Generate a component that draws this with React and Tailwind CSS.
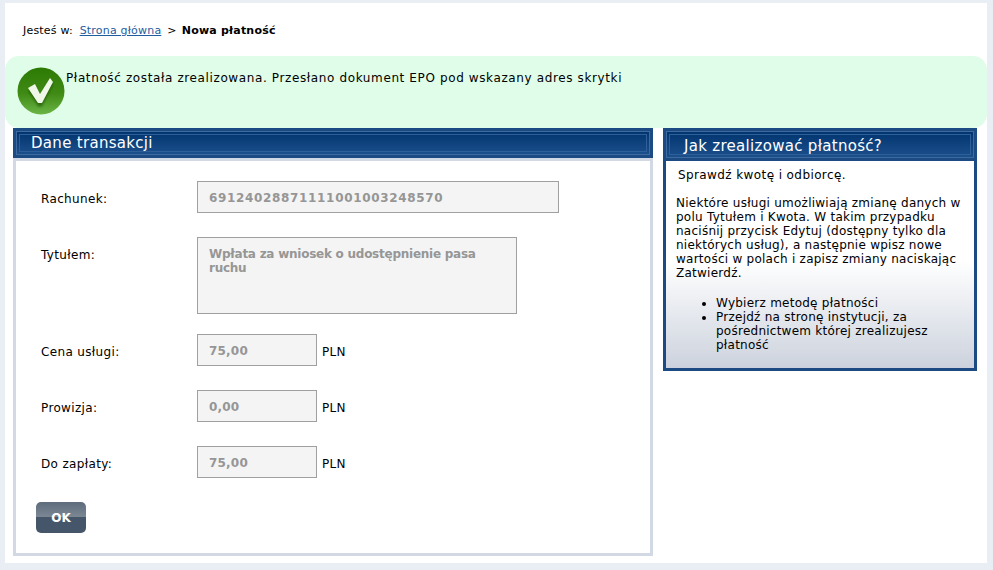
import React from 'react'

const font = "font-['DejaVu_Sans',sans-serif]"

const PanelHeader = ({ title, height = 'h-[30px]', textClass = 'pl-[11px]' }) => (
  <div className={`${height} bg-[#1c4a82] p-[3px]`}>
    <div className="h-full border border-[#3f6a9e] p-[2px] bg-gradient-to-b from-[#023570] to-[#1b4f8b]">
      <div className="h-full border border-[#2f5f98] flex items-center">
        <span className={`${textClass} text-[15px] leading-none tracking-[0.3px] text-white`}>{title}</span>
      </div>
    </div>
  </div>
)

const Row = ({ label, value, width = 'w-[120px]', height = 'h-[32px]', unit, rowClass = '', valueClass = 'tracking-[0.2px]' }) => (
  <div className={`flex ${rowClass}`}>
    <div className="w-[157px] pl-[1px] pt-[11px] text-[12px] leading-[14px] tracking-[0.35px] text-black shrink-0">{label}</div>
    <div className={`${width} ${height} border border-[#a0a0a0] bg-[#f4f4f4] pl-[11px] pr-[30px] pt-[9px] text-[12px] leading-[14px] font-bold text-[#969696] shrink-0 ${valueClass}`}>
      {value}
    </div>
    {unit && <div className="pl-[5px] pt-[11px] text-[12px] leading-[14px] tracking-[0.3px] text-black">{unit}</div>}
  </div>
)

const CheckBadge = () => (
  <svg width="48" height="48" viewBox="0 0 48 48" className="shrink-0">
    <defs>
      <linearGradient id="badge" x1="0" y1="0" x2="0" y2="1">
        <stop offset="0" stopColor="#2c7a04" />
        <stop offset="0.55" stopColor="#3f8a14" />
        <stop offset="1" stopColor="#6ab545" />
      </linearGradient>
      <filter id="soft" x="-20%" y="-20%" width="140%" height="140%">
        <feGaussianBlur stdDeviation="0.9" />
      </filter>
    </defs>
    <circle cx="24" cy="24" r="23.5" fill="url(#badge)" />
    <path d="M11 22 L18 18 L23 28 L33 12 L36 16 L25 38 L21 38 Z" fill="#1c4f06" opacity="0.6" filter="url(#soft)" transform="translate(0 1.5)" />
    <path d="M11 21 L18 17 L23 27 L33 11 L36 15 L25 36 L21 36 Z" fill="#eef7e8" />
  </svg>
)

export default function App() {
  return (
    <div className={`w-[993px] h-[570px] overflow-hidden bg-[#e9edf4] pt-[3px] pl-[5px] ${font}`}>
      <div className="w-[982px] h-[560px] bg-white">
        <div className="h-[53px] pl-[18px] pt-[21px] text-[11px] leading-[14px] tracking-[0.2px] text-black">
          Jesteś w: <a className="ml-[3px] text-[#1f5c9e] underline">Strona główna</a>
          <span className="ml-[6px] mr-[5px]">&gt;</span>
          <b>Nowa płatność</b>
        </div>

        <div className="h-[72px] rounded-[14px] bg-[#e0fde9] flex items-start pl-[12px] pt-[11px]">
          <CheckBadge />
          <div className="pl-[1px] pt-[4px] text-[12px] leading-[14px] tracking-[0.62px] text-black">
            Płatność została zrealizowana. Przesłano dokument EPO pod wskazany adres skrytki
          </div>
        </div>

        <div className="flex items-start pl-[8px] gap-[10px]">
          <div className="w-[640px]">
            <PanelHeader title="Dane transakcji" />
            <div className="h-[398px] border-[3px] border-[#d2d9e5] pl-[24px] pt-[20px]">
              <Row label="Rachunek:" value="69124028871111001003248570" width="w-[362px]" valueClass="tracking-[0.66px]" />
              <Row label="Tytułem:" value="Wpłata za wniosek o udostępnienie pasa ruchu" width="w-[320px]" height="h-[77px]" rowClass="mt-[24px]" valueClass="tracking-[-0.25px]" />
              <Row label="Cena usługi:" value="75,00" unit="PLN" rowClass="mt-[20px]" />
              <Row label="Prowizja:" value="0,00" unit="PLN" rowClass="mt-[24px]" />
              <Row label="Do zapłaty:" value="75,00" unit="PLN" rowClass="mt-[24px]" />
              <button className="mt-[24px] -ml-[4px] block w-[50px] h-[31px] pt-[1px] rounded-[5px] text-white text-[12px] font-bold bg-[linear-gradient(#5d6b7c_0%,#7d8894_50%,#46566a_50%,#46566a_100%)]">
                OK
              </button>
            </div>
          </div>

          <div className="w-[314px] border-[3px] border-[#1c4a82] h-[243px] bg-[linear-gradient(#ffffff_0%,#ffffff_55%,#ccd2dd_100%)]">
            <div className="-m-[3px] mb-0">
              <PanelHeader title="Jak zrealizować płatność?" height="h-[33px]" textClass="pl-[14px] pt-[3px]" />
            </div>
            <div className="px-[10px] text-[12px] leading-[14px] tracking-[0.25px] text-black">
              <p className="pl-[2px] pt-[7px] tracking-[0.4px]">Sprawdź kwotę i odbiorcę.</p>
              <p className="pt-[14px]">
                Niektóre usługi umożliwiają zmianę danych w polu Tytułem i Kwota. W takim przypadku naciśnij przycisk Edytuj (dostępny tylko dla niektórych usług), a następnie wpisz nowe wartości w polach i zapisz zmiany naciskając Zatwierdź.
              </p>
              <ul className="list-disc pl-[40px] pt-[16px]">
                <li>Wybierz metodę płatności</li>
                <li>Przejdź na stronę instytucji, za pośrednictwem której zrealizujesz płatność</li>
              </ul>
            </div>
          </div>
        </div>
      </div>
    </div>
  )
}
